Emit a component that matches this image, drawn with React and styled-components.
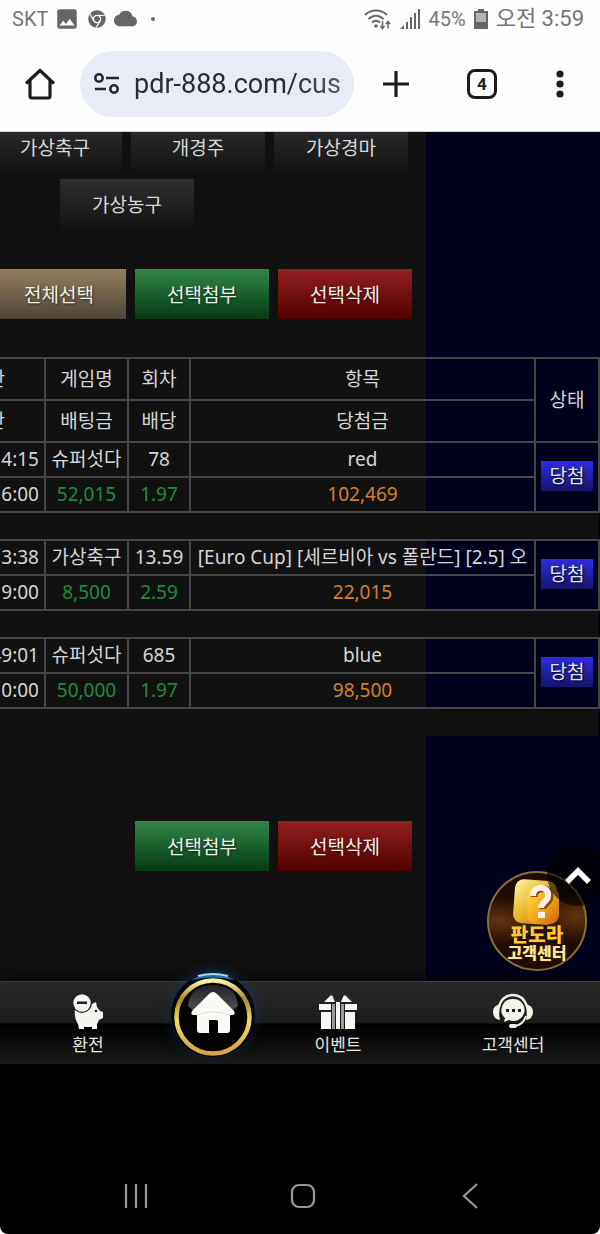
import React from "react";
import styled, { createGlobalStyle } from "styled-components";
import { MdImage, MdCloud } from "react-icons/md";
import { FaChrome } from "react-icons/fa";

const bets = [
  {
    played: "4:15", closed: "6:00", game: "슈퍼섯다", stake: "52,015",
    round: "78", odds: "1.97", pick: "red", prize: "102,469",
  },
  {
    played: "3:38", closed: "9:00", game: "가상축구", stake: "8,500",
    round: "13.59", odds: "2.59",
    pick: "[Euro Cup] [세르비아 vs 폴란드] [2.5] 오", prize: "22,015",
  },
  {
    played: "49:01", closed: "0:00", game: "슈퍼섯다", stake: "50,000",
    round: "685", odds: "1.97", pick: "blue", prize: "98,500",
  },
];

const StatusBar = () => (
  <StatusRow>
    <StatusGroup>
      <StatusText>SKT</StatusText>
      <MdImage size={26} />
      <ChromeIcon size={18} />
      <MdCloud size={23} />
      <Dot />
    </StatusGroup>
    <StatusGroup $wide>
      <svg width="28" height="24" viewBox="0 0 28 24" fill="none" stroke="currentColor" strokeWidth="2">
        <path d="M1 8C7 2 17 2 23 8M4.500 12C9 7.500 15 7.500 19.500 12M8 15.500C10.500 13 13.500 13 16 15.500" />
        <circle cx="12" cy="19" r="1.800" fill="currentColor" stroke="none" />
        <path d="M18.500 14V21M16.500 19L18.500 21.500L20.500 19M24 21.500V14.500M22 17L24 14.500L26 17" strokeWidth="1.500" />
      </svg>
      <svg width="21" height="22" viewBox="0 0 21 22" fill="currentColor">
        <path d="M0 21L4 17V21ZM6 14H8V21H6ZM10 9H12V21H10ZM14 5H16V21H14ZM18 1H20V21H18Z" />
      </svg>
      <StatusText>45%</StatusText>
      <svg width="14" height="20" viewBox="0 0 14 20" fill="currentColor">
        <path d="M4 0H10V2H14V20H0V2H4Z" />
        <path d="M2 4H12V13H2Z" fill="#b4b4b4" />
      </svg>
      <StatusText $clock>오전 3:59</StatusText>
    </StatusGroup>
  </StatusRow>
);

const BrowserBar = () => (
  <Toolbar>
    <ToolButton aria-label="홈">
      <svg width="30" height="32" viewBox="0 0 30 32" fill="none" stroke="currentColor" strokeWidth="3.200" strokeLinejoin="round">
        <path d="M1 15.500L15 2.500L29 15.500M5 12.500V28Q5 30 7 30H23Q25 30 25 28V12.500" />
      </svg>
    </ToolButton>
    <AddressBar>
      <svg width="26" height="22" viewBox="0 0 26 22" fill="none" stroke="#24262b" strokeWidth="2.500">
        <circle cx="5" cy="5" r="3.700" />
        <path d="M12 5H25M1 16H12" />
        <circle cx="20" cy="16" r="3.700" />
      </svg>
      <AddressInput aria-label="주소" defaultValue="pdr-888.com/cust" />
    </AddressBar>
    <ToolButtons>
      <ToolButton aria-label="새 탭">
        <svg width="28" height="28" viewBox="0 0 28 28" fill="none" stroke="currentColor" strokeWidth="3.200">
          <path d="M14 1V27M1 14H27" />
        </svg>
      </ToolButton>
      <TabCount aria-label="탭 4개">4</TabCount>
      <ToolButton aria-label="메뉴">
        <svg width="8" height="28" viewBox="0 0 8 28" fill="currentColor">
          <circle cx="4" cy="4" r="3.600" />
          <circle cx="4" cy="14" r="3.600" />
          <circle cx="4" cy="24" r="3.600" />
        </svg>
      </ToolButton>
    </ToolButtons>
  </Toolbar>
);

const Bet = ({ bet }) => (
  <>
    <Row>
      <TimeCell>{bet.played}</TimeCell>
      <Cell>{bet.game}</Cell>
      <Cell>{bet.round}</Cell>
      <Cell>{bet.pick}</Cell>
      <Cell rowSpan={2}>
        <Result>당첨</Result>
      </Cell>
    </Row>
    <Row>
      <TimeCell>{bet.closed}</TimeCell>
      <Cell $color="#1f8b3c">{bet.stake}</Cell>
      <Cell $color="#1f8b3c">{bet.odds}</Cell>
      <Cell $color="#d5802a">{bet.prize}</Cell>
    </Row>
    <Row $spacer>
      <SpacerCell colSpan={5} />
    </Row>
  </>
);

const BetTable = () => (
  <Table>
    <colgroup>
      <Col $width={64} />
      <Col $width={83} />
      <Col $width={62} />
      <col />
      <Col $width={64} />
    </colgroup>
    <thead>
      <Row $head>
        <TimeHead>간</TimeHead>
        <Head>게임명</Head>
        <Head>회차</Head>
        <Head>항목</Head>
        <Head rowSpan={2}>상태</Head>
      </Row>
      <Row $head>
        <TimeHead>간</TimeHead>
        <Head>배팅금</Head>
        <Head>배당</Head>
        <Head>당첨금</Head>
      </Row>
    </thead>
    <tbody>
      {bets.map((bet) => (
        <Bet key={bet.played} bet={bet} />
      ))}
    </tbody>
  </Table>
);

const SupportBadge = () => (
  <Support href="#support">
    <svg width="52" height="52" viewBox="0 0 52 52">
      <defs>
        <linearGradient id="back" x1="0" y1="0" x2="1" y2="1">
          <stop offset="0" stopColor="#fff6a0" />
          <stop offset="0.500" stopColor="#e9b52b" />
          <stop offset="1" stopColor="#a86b12" />
        </linearGradient>
        <linearGradient id="front" x1="0" y1="0" x2="1" y2="1">
          <stop offset="0" stopColor="#ffe04d" />
          <stop offset="0.550" stopColor="#f4a31a" />
          <stop offset="1" stopColor="#c5640a" />
        </linearGradient>
      </defs>
      <rect x="3" y="2" width="42" height="44" rx="9" fill="url(#back)" transform="rotate(4 22 24)" />
      <rect x="16" y="9" width="32" height="37" rx="9" fill="url(#front)" />
      <path d="M23 19C23 8 40 8 39 19C39 25 32 25 32 31" fill="none" stroke="#8d4a10" strokeWidth="7" />
      <path d="M22 18C22 7 38 7 37 18C37 24 30 24 30 30" fill="none" stroke="#fff1ea" strokeWidth="6" />
      <path d="M27 34H34V40H27Z" fill="#fff1ea" />
    </svg>
    <SupportName>판도라</SupportName>
    <SupportLabel>고객센터</SupportLabel>
  </Support>
);

const SiteNav = () => (
  <NavBar>
    <NavLink href="#exchange">
      <svg width="32" height="38" viewBox="0 0 32 38">
        <path d="M3 16C3 13 10 12 18 12L24 9L25 14L28 18L31 19V25L27 27L25 31V36H20V34H12V36H7L6 31Q2 26 3 16Z" fill="#f6f6f0" />
        <circle cx="24" cy="18" r="1.300" fill="#222" />
        <circle cx="10" cy="10" r="10" fill="#222" />
        <circle cx="10" cy="10" r="8.700" fill="#f6f6f0" />
        <path d="M5 8.500H15V11H5Z" fill="#222" />
      </svg>
      환전
    </NavLink>
    <HomeLink href="#home" aria-label="홈">
      <svg width="86" height="92" viewBox="0 0 86 92">
        <defs>
          <linearGradient id="gold" x1="0" y1="0" x2="0" y2="1">
            <stop offset="0" stopColor="#fff4a6" />
            <stop offset="0.250" stopColor="#a8892c" />
            <stop offset="0.550" stopColor="#f3d960" />
            <stop offset="1" stopColor="#d5a249" />
          </linearGradient>
          <linearGradient id="gloss" x1="0" y1="0" x2="0" y2="1">
            <stop offset="0" stopColor="#222224" />
            <stop offset="1" stopColor="#55555a" />
          </linearGradient>
        </defs>
        <circle cx="43" cy="48" r="42" fill="#02060d" />
        <path d="M21 13Q43 0 65 13Q43 8 21 13Z" fill="#1b6fab" />
        <path d="M28 9Q43 5 58 9" fill="none" stroke="#a9d7f0" strokeWidth="2" />
        <circle cx="43" cy="50" r="36.500" fill="#030303" stroke="url(#gold)" strokeWidth="4.500" />
        <path d="M18 39Q19 19 43 18Q67 19 68 39Q61 47 43 47Q25 47 18 39Z" fill="url(#gloss)" />
        <path d="M43 25Q45 25 47 27L64 44Q66 48 62 48H60V63Q60 66 57 66H48V54Q48 53 46 53H40Q39 53 39 54V66H30Q27 66 27 63V48H24Q20 48 22 44L39 27Q41 25 43 25Z" fill="#fafaf6" />
        <path d="M27 48Q43 42 60 48" fill="none" stroke="#dedfd9" />
      </svg>
    </HomeLink>
    <NavLink href="#event">
      <svg width="40" height="38" viewBox="0 0 40 38" fill="#f6f6f6">
        <path d="M6 9L12 3Q14 1 15 4L17 9ZM34 9L28 3Q26 1 25 4L23 9ZM1 11H13V17H1ZM27 11H39V17H27ZM3 19H13V36H3ZM27 19H37V36H27Z" />
        <path d="M14 11H17V36H14ZM23 11H26V36H23Z" fill="#9a9a9a" />
        <path d="M18 9H22V36H18Z" />
      </svg>
      이벤트
    </NavLink>
    <NavLink href="#support">
      <svg width="42" height="38" viewBox="0 0 42 38">
        <path d="M7 13Q11 2 21 2T35 13" fill="none" stroke="#f2f2e8" strokeWidth="2.500" />
        <path d="M9 11Q1 12 1 19Q1 26 8 27Q6 19 9 11ZM33 11Q41 12 41 19Q41 26 34 27Q36 19 33 11Z" fill="#f2f2e8" />
        <path d="M34 23Q31 32 23 33" fill="none" stroke="#f2f2e8" strokeWidth="2" />
        <rect x="17" y="31" width="8" height="4" rx="2" fill="#f2f2e8" />
        <path d="M21 6A11 11 0 1 1 17 27L12 29L13 25A11 11 0 0 1 21 6Z" fill="#f2f2e8" />
        <path d="M14 16H17V19H14ZM20 16H23V19H20ZM26 16H29V19H26Z" fill="#222" />
      </svg>
      고객센터
    </NavLink>
  </NavBar>
);

const SystemNav = () => (
  <SystemBar>
    <SystemButton aria-label="최근 앱">
      <svg width="28" height="28" viewBox="0 0 28 28" fill="none" stroke="currentColor" strokeWidth="2.200">
        <path d="M4 2V26M14 2V26M24 2V26" />
      </svg>
    </SystemButton>
    <SystemButton aria-label="홈 화면">
      <svg width="28" height="28" viewBox="0 0 28 28" fill="none" stroke="currentColor" strokeWidth="2.200">
        <rect x="3" y="3" width="22" height="22" rx="7" />
      </svg>
    </SystemButton>
    <SystemButton aria-label="뒤로">
      <svg width="28" height="28" viewBox="0 0 28 28" fill="none" stroke="currentColor" strokeWidth="2.200">
        <path d="M21 2L8 14L21 26" />
      </svg>
    </SystemButton>
  </SystemBar>
);

const App = () => {
  return (
    <>
      <GlobalStyle />
      <Phone>
        <StatusBar />
        <BrowserBar />
        <Page>
          <Tabs>
            <TabRow>
              <TabButton>가상축구</TabButton>
              <TabButton>개경주</TabButton>
              <TabButton>가상경마</TabButton>
            </TabRow>
            <TabRow $last>
              <TabButton>가상농구</TabButton>
            </TabRow>
          </Tabs>
          <Actions>
            <ActionButton $from="#94805f" $to="#4d4437">전체선택</ActionButton>
            <ActionButton $from="#318549" $to="#033b13">선택첨부</ActionButton>
            <ActionButton $from="#932022" $to="#510000">선택삭제</ActionButton>
          </Actions>
          <BetTable />
          <Actions $bottom>
            <ActionButton $from="#318549" $to="#033b13">선택첨부</ActionButton>
            <ActionButton $from="#932022" $to="#510000">선택삭제</ActionButton>
          </Actions>
          <SupportBadge />
          <TopButton aria-label="맨 위로">
            <svg width="28" height="20" viewBox="0 0 28 20" fill="none" stroke="#fff" strokeWidth="5.500">
              <path d="M3 17L14 6L25 17" />
            </svg>
          </TopButton>
        </Page>
        <SiteNav />
        <SystemNav />
      </Phone>
    </>
  );
};

const GlobalStyle = createGlobalStyle`
  * {
    box-sizing: border-box;
  }
  body {
    margin: 0;
    background: #fff;
    font-family: "Noto Sans", "Noto Sans CJK KR", sans-serif;
  }
  button, input {
    font-family: inherit;
    border: 0;
    padding: 0;
    background: none;
  }
  svg {
    display: block;
    flex-shrink: 0;
  }
`;

const Phone = styled.div`
  display: flex;
  flex-direction: column;
  min-height: 100vh;
  overflow: hidden;
  background: #000;
  border-radius: 0 0 8px 8px;
`;

const StatusRow = styled.div`
  display: flex;
  justify-content: space-between;
  height: 37px;
  padding: 0 16px 0 12px;
  background: #fefefe;
  color: #666;
`;

const StatusGroup = styled.div`
  display: flex;
  align-items: center;
  gap: ${(props) => (props.$wide ? "8px" : "6px")};
`;

const StatusText = styled.span`
  font-family: Roboto, "Noto Sans CJK KR", sans-serif;
  font-size: ${(props) => (props.$clock ? "22px" : "20px")};
  line-height: 24px;
  color: #757575;
  white-space: nowrap;
`;

const ChromeIcon = styled(FaChrome)`
  margin: 0 2px;
`;

const Dot = styled.i`
  width: 4px;
  height: 4px;
  margin-left: 8px;
  border-radius: 50%;
  background: #666;
`;

const Toolbar = styled.header`
  display: flex;
  align-items: center;
  height: 95px;
  padding: 0 34px 0 25px;
  background: #fefefe;
  border-bottom: 1px solid #cdd2d8;
`;

const ToolButtons = styled.div`
  display: flex;
  flex: 1;
  align-items: center;
  justify-content: space-between;
  margin-left: 28px;
`;

const ToolButton = styled.button`
  display: flex;
  align-items: center;
  justify-content: center;
  min-width: 12px;
  color: #1c1c1e;
`;

const TabCount = styled(ToolButton)`
  width: 30px;
  height: 30px;
  border: 3px solid #1c1c1e;
  border-radius: 8px;
  font-family: Roboto, sans-serif;
  font-size: 17px;
  font-weight: 700;
`;

const AddressBar = styled.div`
  display: flex;
  align-items: center;
  gap: 14px;
  width: 274px;
  height: 66px;
  margin-left: 25px;
  padding: 0 14px;
  border-radius: 33px;
  background: #e8ecf6;
`;

const AddressInput = styled.input`
  flex: 1;
  min-width: 0;
  height: 40px;
  outline: none;
  font-family: Roboto, sans-serif;
  font-size: 27px;
  color: #2a2c31;
  mask-image: linear-gradient(to right, #000 78%, rgba(0, 0, 0, 0.75));
`;

const Page = styled.main`
  position: relative;
  overflow: hidden;
  background: linear-gradient(to right, #111 71%, #00001c 71%);
`;

const Tabs = styled.div`
  margin-top: -10px;
`;

const TabRow = styled.div`
  display: flex;
  gap: 9px;
  margin-left: ${(props) => (props.$last ? "60px" : "-12px")};
  margin-bottom: 7px;
`;

const TabButton = styled.button`
  width: 134px;
  height: 50px;
  font-size: 19px;
  color: #d8d8d8;
  background: linear-gradient(#2e2e2e, #131313);
`;

const Actions = styled.div`
  display: flex;
  gap: 9px;
  margin-top: ${(props) => (props.$bottom ? "85px" : "40px")};
  margin-left: ${(props) => (props.$bottom ? "135px" : "-8px")};
  padding-bottom: ${(props) => (props.$bottom ? "110px" : "38px")};
`;

const ActionButton = styled.button`
  width: 134px;
  height: 50px;
  font-size: 19px;
  color: #f0f0ec;
  text-shadow: 1px 1px 2px rgba(0, 0, 0, 0.6);
  background: linear-gradient(${(props) => props.$from}, ${(props) => props.$to});
`;

const Table = styled.table`
  width: calc(100% + 20px);
  margin-left: -20px;
  table-layout: fixed;
  border-collapse: collapse;
  font-size: 19px;
  line-height: 28px;
  color: #d6d6d6;
`;

const Col = styled.col`
  width: ${(props) => props.$width}px;
`;

const Row = styled.tr`
  height: ${(props) => (props.$head ? 42 : props.$spacer ? 28 : 35)}px;
`;

const Cell = styled.td`
  padding: 0 5px 2px;
  border: 2px solid #464648;
  overflow: hidden;
  white-space: nowrap;
  text-align: center;
  color: ${(props) => props.$color || "inherit"};
`;

const TimeCell = styled(Cell)`
  text-align: right;
`;

const Head = styled.th`
  padding: 0;
  border: 2px solid #464648;
  font-weight: 400;
`;

const TimeHead = styled(Head)`
  padding-right: 39px;
  text-align: right;
`;

const SpacerCell = styled.td`
  padding: 0;
  background: #111;
`;

const Result = styled.span`
  display: block;
  width: 52px;
  height: 30px;
  line-height: 30px;
  color: #e4e4f4;
  text-shadow: 1px 1px 2px #000;
  background: linear-gradient(#2c2ce0, #15156e);
`;

const Support = styled.a`
  position: absolute;
  right: 13px;
  bottom: 10px;
  display: flex;
  flex-direction: column;
  align-items: center;
  width: 100px;
  height: 100px;
  padding-top: 5px;
  border: 2px solid #88703a;
  border-radius: 50%;
  background:
    radial-gradient(ellipse at 10% 50%, rgba(130, 70, 15, 0.7), transparent 35%),
    radial-gradient(ellipse at 92% 45%, rgba(130, 70, 15, 0.7), transparent 35%),
    #1f0d05;
  text-decoration: none;
  white-space: nowrap;
  text-shadow: 1px 1px 1px #3a1800;
`;

const SupportName = styled.b`
  margin-top: -4px;
  font-size: 19px;
  font-weight: 900;
  line-height: 19px;
  color: #ffc935;
`;

const SupportLabel = styled.b`
  font-size: 16px;
  font-weight: 900;
  line-height: 16px;
  color: #ffe79a;
`;

const TopButton = styled.button`
  position: absolute;
  right: -9px;
  bottom: 75px;
  display: flex;
  align-items: center;
  justify-content: center;
  width: 62px;
  height: 62px;
  border-radius: 50%;
  background: rgba(0, 0, 0, 0.6);
`;

const NavBar = styled.nav`
  position: relative;
  display: grid;
  grid-template-columns: 176fr minmax(0, 74fr) 176fr 174fr;
  height: 83px;
  border-top: 1px solid #3a3a3a;
  background: linear-gradient(#292929, #1c1c1c 50%, #000 51%, #1a1a1a);
  box-shadow: 0 -4px 12px rgba(0, 0, 0, 0.5);
`;

const NavLink = styled.a`
  display: flex;
  flex-direction: column;
  align-items: center;
  gap: 2px;
  padding-top: 11px;
  font-size: 17px;
  line-height: 24px;
  color: #e6e6e6;
  text-decoration: none;
`;

const HomeLink = styled.a`
  display: flex;
  justify-content: center;
  margin-top: -15px;
  filter: drop-shadow(0 -3px 6px rgba(20, 60, 120, 0.5));
`;

const SystemBar = styled.div`
  display: flex;
  flex: 1;
  align-items: flex-end;
  justify-content: space-around;
  min-height: 170px;
  padding: 0 46px 24px 52px;
`;

const SystemButton = styled.button`
  padding: 0;
  color: #999;
`;

export default App;
